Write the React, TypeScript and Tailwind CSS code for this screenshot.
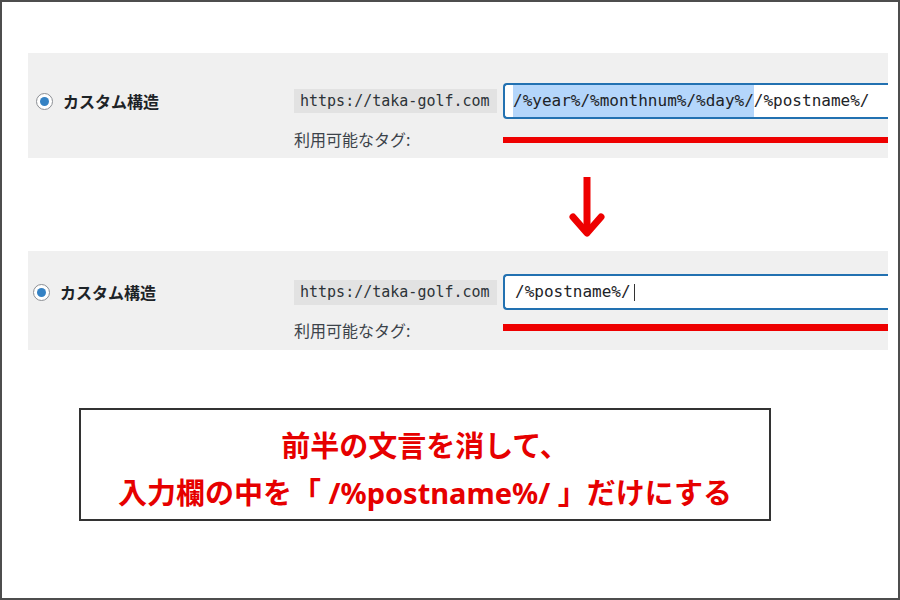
const jp = { fontFamily: '"Noto Sans CJK JP", "Noto Sans", sans-serif' };
const mono = { fontFamily: '"DejaVu Sans Mono", "Liberation Mono", monospace' };

function Radio() {
  return (
    <span className="flex h-[17px] w-[17px] shrink-0 items-center justify-center rounded-full border border-[#8c8f94] bg-white">
      <span className="h-[9px] w-[9px] rounded-full bg-[#3582c4]" />
    </span>
  );
}

function UrlBox({ h }: { h: string }) {
  return (
    <div
      style={mono}
      className={`flex w-[203px] items-center bg-[#e2e2e2] px-[6px] text-[15px] text-[#2c3338] ${h}`}
    >
      https://taka-golf.com
    </div>
  );
}

function TagsLabel({ leading }: { leading: string }) {
  return (
    <div style={jp} className={`text-[16px] text-[#3c434a] ${leading}`}>
      利用可能なタグ:
    </div>
  );
}

function DownArrow() {
  return (
    <svg width="40" height="70" viewBox="0 0 40 70" fill="none">
      <path d="M20 5 V60" stroke="#ee0000" strokeWidth="7" />
      <path
        d="M6 45 L20 61 L34 45"
        stroke="#ee0000"
        strokeWidth="7"
        strokeLinecap="round"
        strokeLinejoin="round"
      />
    </svg>
  );
}

export default function App() {
  return (
    <div className="h-[600px] w-[900px] overflow-hidden border-2 border-[#4d4d4d] bg-white">
      {/* before */}
      <div className="ml-[26px] mt-[51px] flex h-[105px] w-[860px] bg-[#f0f0f0] pt-[30px]">
        <div className="flex h-[36px] w-[266px] items-center gap-[10px] pl-[8px]">
          <Radio />
          <span style={jp} className="text-[16px] font-bold text-[#1d2327]">
            カスタム構造
          </span>
        </div>
        <div className="grid flex-1 grid-cols-[209px_1fr]">
          <div className="flex h-[36px] items-center">
            <UrlBox h="h-[24px]" />
          </div>
          <div
            style={mono}
            className="flex h-[36px] items-stretch rounded-l-[4px] border-y-2 border-l-2 border-[#2271b1] bg-white pl-[8px] text-[16px] text-[#1d2327]"
          >
            <span className="flex items-center bg-[#b4d6fb]">/%year%/%monthnum%/%day%/</span>
            <span className="flex items-center">/%postname%/</span>
          </div>
          <TagsLabel leading="leading-[34px]" />
          <div className="mt-[15px] h-[6px] bg-[#ee0000]" />
        </div>
      </div>

      {/* arrow */}
      <div className="h-[93px] pl-[565px] pt-[14px]">
        <DownArrow />
      </div>

      {/* after */}
      <div className="ml-[26px] flex h-[99px] w-[860px] bg-[#f0f0f0] pt-[23px]">
        <div className="flex h-[36px] w-[266px] items-center gap-[10px] pl-[5px]">
          <Radio />
          <span style={jp} className="text-[16px] font-bold text-[#1d2327]">
            カスタム構造
          </span>
        </div>
        <div className="grid flex-1 grid-cols-[209px_1fr]">
          <div className="flex h-[36px] items-center">
            <UrlBox h="h-[25px]" />
          </div>
          <div
            style={mono}
            className="flex h-[36px] items-center rounded-l-[4px] border-y-2 border-l-2 border-[#2271b1] bg-white pl-[10px] text-[16px] text-[#1d2327]"
          >
            <span>/%postname%/</span>
            <span className="ml-[3px] h-[17px] w-[1px] bg-[#333]" />
          </div>
          <TagsLabel leading="leading-[32px]" />
          <div className="mt-[10px] h-[7px] bg-[#ee0000]" />
        </div>
      </div>

      {/* note */}
      <div
        style={{ fontFamily: '"Noto Sans", "Noto Sans CJK JP", sans-serif' }}
        className="ml-[77px] mt-[58px] flex h-[113px] w-[692px] flex-col items-center border-2 border-[#333] pt-[12px] text-[29px] font-bold leading-[47px] text-[#e60000]"
      >
        <div>前半の文言を消して、</div>
        <div>入力欄の中を「 /%postname%/ 」だけにする</div>
      </div>
    </div>
  );
}
